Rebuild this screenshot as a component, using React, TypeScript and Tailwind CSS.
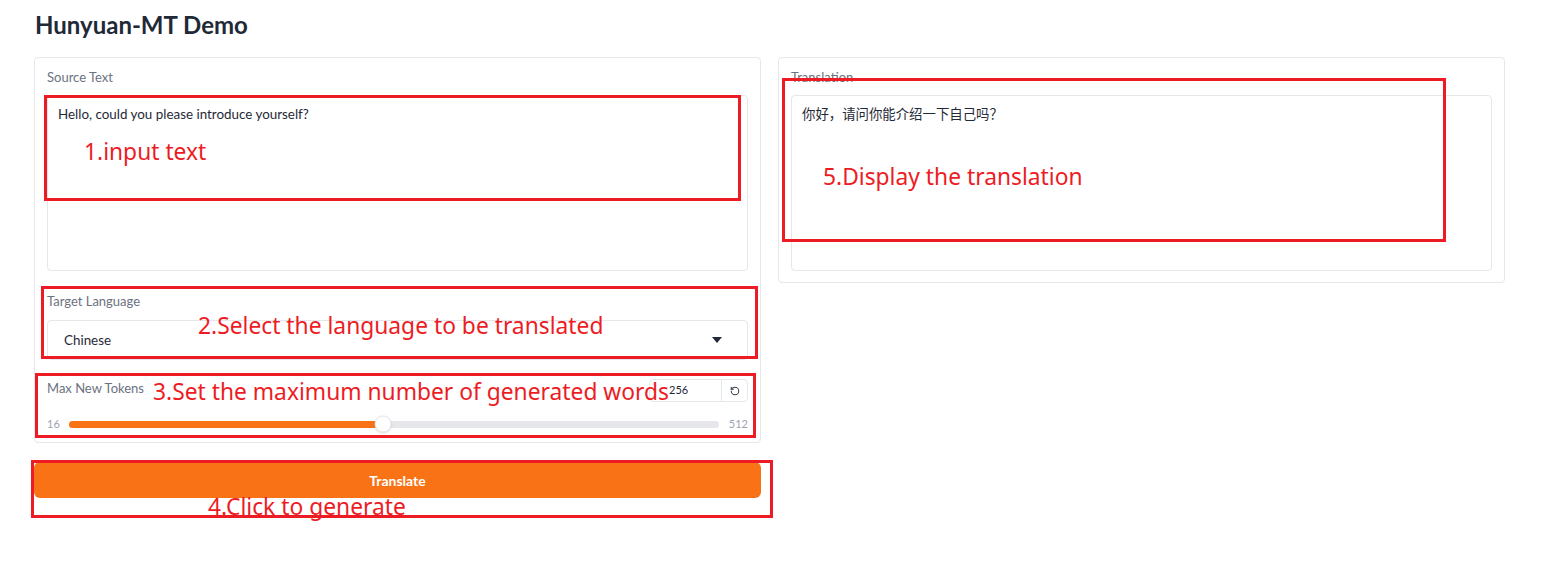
import { RotateCcw } from 'lucide-react';

const font = { fontFamily: 'Lato, "Noto Sans CJK SC", sans-serif' };

// red annotation overlays, placed over the screenshot content
const boxes = [
    { l: 44, t: 95, w: 697, h: 106 },
    { l: 41, t: 286, w: 717, h: 73 },
    { l: 35, t: 373, w: 721, h: 65 },
    { l: 31, t: 460, w: 742, h: 58 },
    { l: 782, t: 78, w: 664, h: 164 },
];

const notes = [
    { l: 84, t: 137, text: '1.input text' },
    { l: 198, t: 311, text: '2.Select the language to be translated' },
    { l: 153, t: 377, text: '3.Set the maximum number of generated words' },
    { l: 208, t: 492, text: '4.Click to generate' },
    { l: 823, t: 162, text: '5.Display the translation' },
];

const Label = ({ children }: { children: string }) => (
    <div className="text-[13px] leading-4 text-[#6b7280]">{children}</div>
);

const App = () => {
    const min = 16;
    const max = 512;
    const value = 256;
    const pct = ((value - min) / (max - min)) * 100;

    return (
        <div className="relative w-[1549px] h-[576px] bg-white overflow-hidden" style={font}>
            <div className="pl-[34px] pt-[10px] w-[1505px]">
                <h1 className="text-[24px] leading-[30px] font-bold text-[#1f2937] pl-px">Hunyuan-MT Demo</h1>

                <div className="mt-[17px] flex gap-[17px] items-start">
                    {/* Left column */}
                    <div className="w-[727px] flex flex-col gap-[19px]">
                        <div className="border border-[#e5e7eb] rounded-[4px] px-3 pt-[11px] pb-[9px]">
                            <Label>Source Text</Label>
                            <div className="mt-[10px] h-[176px] border border-[#e5e7eb] rounded-[4px] px-[10px] py-[10px] text-[13.4px] leading-4 text-[#1f2937]">
                                Hello, could you please introduce yourself?
                            </div>

                            <div className="mt-[22px]">
                                <Label>Target Language</Label>
                            </div>
                            <div className="mt-[11px] h-[40px] border border-[#e5e7eb] rounded-[4px] flex items-center justify-between pl-4 pr-[25px] text-[13.4px] text-[#1f2937]">
                                <span>Chinese</span>
                                <svg width="10" height="6" viewBox="0 0 10 6">
                                    <path d="M0 0 L10 0 L5 6 Z" fill="#1f2937" />
                                </svg>
                            </div>

                            <div className="mt-[19px] flex items-start justify-between h-[23px]">
                                <div className="pt-px">
                                    <Label>Max New Tokens</Label>
                                </div>
                                <div className="flex h-[23px] w-[99px] border border-[#e5e7eb] rounded-[4px] text-[11px] text-[#1f2937]">
                                    <div className="flex-1 flex items-center pl-[19px]">{value}</div>
                                    <div className="w-[26px] border-l border-[#e5e7eb] flex items-center justify-center">
                                        <RotateCcw size={10} strokeWidth={2.5} color="#374151" />
                                    </div>
                                </div>
                            </div>

                            <div className="mt-[13px] flex items-center gap-[10px] h-[18px]">
                                <span className="text-[11px] text-[#9ca3af] w-[12px]">{min}</span>
                                <div className="relative flex-1 h-[7px] rounded-full bg-[#e5e7eb]">
                                    <div className="h-full rounded-full bg-[#f97316]" style={{ width: `${pct}%` }} />
                                    <div
                                        className="absolute top-1/2 -translate-y-1/2 -translate-x-1/2 w-[17px] h-[17px] rounded-full bg-white border border-[#e5e7eb] shadow-sm"
                                        style={{ left: `${pct}%` }}
                                    />
                                </div>
                                <span className="text-[11px] text-[#9ca3af]">{max}</span>
                            </div>
                        </div>

                        <button className="h-[36px] rounded-[6px] bg-[#f97316] text-white text-[14px] font-bold">
                            Translate
                        </button>
                    </div>

                    {/* Right column */}
                    <div className="w-[727px] border border-[#e5e7eb] rounded-[4px] px-3 pt-[11px] pb-[11px]">
                        <Label>Translation</Label>
                        <div className="mt-[10px] h-[176px] border border-[#e5e7eb] rounded-[4px] px-[10px] py-[10px] text-[13.4px] leading-4 text-[#1f2937]">
                            你好，请问你能介绍一下自己吗？
                        </div>
                    </div>
                </div>
            </div>

            {boxes.map((b, i) => (
                <div
                    key={i}
                    className="absolute border-[3px] border-[#ed1c24] pointer-events-none"
                    style={{ left: b.l, top: b.t, width: b.w, height: b.h }}
                />
            ))}
            {notes.map((n, i) => (
                <div
                    key={i}
                    className="absolute text-[22.8px] leading-[30px] text-[#ed1c24] whitespace-nowrap"
                    style={{ left: n.l, top: n.t, fontFamily: '"Noto Sans", sans-serif' }}
                >
                    {n.text}
                </div>
            ))}
        </div>
    );
};

export default App;
